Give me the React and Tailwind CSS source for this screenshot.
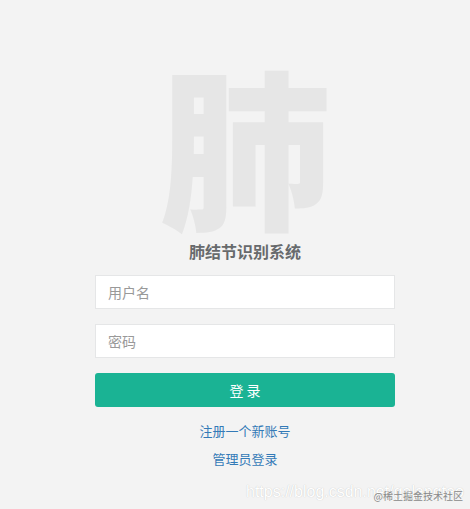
export default function App() {
  const cjk = { fontFamily: '"Noto Sans CJK SC", "Noto Sans", sans-serif' };
  return (
    <div className="relative w-[470px] h-[509px] bg-[#f3f3f3] overflow-hidden" style={cjk}>
      <div className="flex flex-col items-center pt-[55px] pl-[20px]">
        <div className="text-[172px] leading-none font-black text-[#e6e6e6] h-[178px] select-none">肺</div>
        <h3 className="mt-[8px] text-[16px] leading-[20px] font-bold text-[#676a6c]">肺结节识别系统</h3>
        <div className="mt-[14px] w-[300px] flex flex-col">
          <input
            className="h-[34px] w-full bg-white border border-[#e5e6e7] px-3 text-[14px] text-[#555] placeholder:text-[#999] outline-none"
            placeholder="用户名"
          />
          <input
            className="mt-[15px] h-[34px] w-full bg-white border border-[#e5e6e7] px-3 text-[14px] text-[#555] placeholder:text-[#999] outline-none"
            placeholder="密码"
            type="text"
          />
          <button className="mt-[15px] h-[34px] w-full rounded-[3px] bg-[#1ab394] text-white text-[14px]">
            登 录
          </button>
          <a className="mt-[15px] text-center text-[13px] leading-[18px] text-[#337ab7]">注册一个新账号</a>
          <a className="mt-[10px] text-center text-[13px] leading-[18px] text-[#337ab7]">管理员登录</a>
        </div>
      </div>
      <div className="absolute left-[246px] top-[480px] text-[16px] text-white whitespace-nowrap [text-shadow:0_0_1px_#bbb]" style={{ fontFamily: '"Liberation Sans", sans-serif' }}>
        https://blog.csdn.net/galangtao
      </div>
      <div className="absolute right-[7px] top-[490px] text-[10px] leading-[12px] text-[#8a8a8a] whitespace-nowrap" style={{ fontFamily: '"Noto Sans CJK SC", serif' }}>
        @稀土掘金技术社区
      </div>
    </div>
  );
}
